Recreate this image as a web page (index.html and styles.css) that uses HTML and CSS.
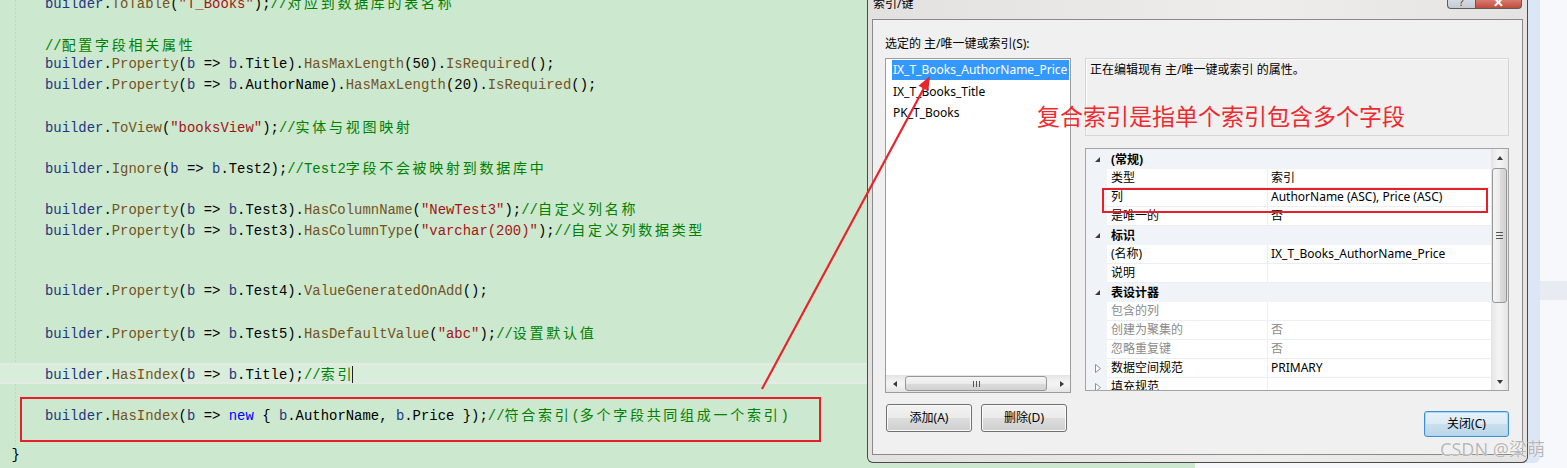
FILE: index.html
```html
<!DOCTYPE html>
<html lang="zh-CN">
<head>
<meta charset="utf-8">
<title>索引/键</title>
<link rel="stylesheet" href="styles.css">
</head>
<body>
<div class="screen">
  <div class="editor">
    <div class="code">
      <div class="guide">
<div class="ln">    <span class="v">builder</span>.<span class="m">ToTable</span>(<span class="s">"T_Books"</span>);<span class="c">//<span class="cn">对应到数据库的表名称</span></span></div>
<div class="ln"> </div>
<div class="ln">    <span class="c">//<span class="cn">配置字段相关属性</span></span></div>
<div class="ln">    <span class="v">builder</span>.<span class="m">Property</span>(<span class="v">b</span> =&gt; <span class="v">b</span>.Title).<span class="m">HasMaxLength</span>(50).<span class="m">IsRequired</span>();</div>
<div class="ln">    <span class="v">builder</span>.<span class="m">Property</span>(<span class="v">b</span> =&gt; <span class="v">b</span>.AuthorName).<span class="m">HasMaxLength</span>(20).<span class="m">IsRequired</span>();</div>
<div class="ln"> </div>
<div class="ln">    <span class="v">builder</span>.<span class="m">ToView</span>(<span class="s">"booksView"</span>);<span class="c">//<span class="cn">实体与视图映射</span></span></div>
<div class="ln"> </div>
<div class="ln">    <span class="v">builder</span>.<span class="m">Ignore</span>(<span class="v">b</span> =&gt; <span class="v">b</span>.Test2);<span class="c">//Test2<span class="cn">字段不会被映射到数据库中</span></span></div>
<div class="ln"> </div>
<div class="ln">    <span class="v">builder</span>.<span class="m">Property</span>(<span class="v">b</span> =&gt; <span class="v">b</span>.Test3).<span class="m">HasColumnName</span>(<span class="s">"NewTest3"</span>);<span class="c">//<span class="cn">自定义列名称</span></span></div>
<div class="ln">    <span class="v">builder</span>.<span class="m">Property</span>(<span class="v">b</span> =&gt; <span class="v">b</span>.Test3).<span class="m">HasColumnType</span>(<span class="s">"varchar(200)"</span>);<span class="c">//<span class="cn">自定义列数据类型</span></span></div>
<div class="ln"> </div>
<div class="ln"> </div>
<div class="ln">    <span class="v">builder</span>.<span class="m">Property</span>(<span class="v">b</span> =&gt; <span class="v">b</span>.Test4).<span class="m">ValueGeneratedOnAdd</span>();</div>
<div class="ln"> </div>
<div class="ln">    <span class="v">builder</span>.<span class="m">Property</span>(<span class="v">b</span> =&gt; <span class="v">b</span>.Test5).<span class="m">HasDefaultValue</span>(<span class="s">"abc"</span>);<span class="c">//<span class="cn">设置默认值</span></span></div>
<div class="ln"> </div>
<div class="ln cur">    <span class="v">builder</span>.<span class="m">HasIndex</span>(<span class="v">b</span> =&gt; <span class="v">b</span>.Title);<span class="c">//<span class="cn">索引</span></span><span class="caret"></span></div>
<div class="ln"> </div>
<div class="ln">    <span class="v">builder</span>.<span class="m">HasIndex</span>(<span class="v">b</span> =&gt; <span class="k">new</span> { <span class="v">b</span>.AuthorName, <span class="v">b</span>.Price });<span class="c">//<span class="cn">符合索引</span>(<span class="cn">多个字段共同组成一个索引</span>)</span></div>
<div class="ln"> </div>
      </div>
<div class="ln">}</div>
    </div>
  </div>
  <div class="side"><div class="side-band"></div></div>

  <div class="dialog">
    <div class="titlebar">
      <span class="title">索引/键</span>
      <div class="caption-btns">
        <span class="cbtn help">?</span>
        <span class="cbtn close">✕</span>
      </div>
    </div>
    <div class="client">
      <div class="label">选定的 主/唯一键或索引(S):</div>
      <div class="listbox">
        <div class="items">
          <div class="item sel">IX_T_Books_AuthorName_Price</div>
          <div class="item">IX_T_Books_Title</div>
          <div class="item">PK_T_Books</div>
        </div>
        <div class="hscroll">
          <span class="sbtn"><span class="tri-left"></span></span>
          <span class="hthumb"><i></i><i></i><i></i></span>
          <span class="sfill"></span>
          <span class="sbtn"><span class="tri-right"></span></span>
        </div>
      </div>
      <div class="rightcol">
        <div class="desc">正在编辑现有 主/唯一键或索引 的属性。</div>
        <div class="pgrid">
          <div class="rows">
            <div class="prow cat"><span class="g"><span class="exp"></span></span><span class="n">(常规)</span></div>
            <div class="prow"><span class="g"></span><span class="n">类型</span><span class="val">索引</span></div>
            <div class="prow"><span class="g"></span><span class="n">列</span><span class="val">AuthorName (ASC), Price (ASC)</span></div>
            <div class="prow"><span class="g"></span><span class="n">是唯一的</span><span class="val">否</span></div>
            <div class="prow cat"><span class="g"><span class="exp"></span></span><span class="n">标识</span></div>
            <div class="prow"><span class="g"></span><span class="n">(名称)</span><span class="val">IX_T_Books_AuthorName_Price</span></div>
            <div class="prow"><span class="g"></span><span class="n">说明</span><span class="val"></span></div>
            <div class="prow cat"><span class="g"><span class="exp"></span></span><span class="n">表设计器</span></div>
            <div class="prow dis"><span class="g"></span><span class="n">包含的列</span><span class="val"></span></div>
            <div class="prow dis"><span class="g"></span><span class="n">创建为聚集的</span><span class="val">否</span></div>
            <div class="prow dis"><span class="g"></span><span class="n">忽略重复键</span><span class="val">否</span></div>
            <div class="prow"><span class="g"><svg class="col" width="6" height="9" viewBox="0 0 6 9"><polygon points="0.5,0.5 5.5,4.5 0.5,8.5" fill="#fff" stroke="#8f8f8f"/></svg></span><span class="n">数据空间规范</span><span class="val">PRIMARY</span></div>
            <div class="prow"><span class="g"><svg class="col" width="6" height="9" viewBox="0 0 6 9"><polygon points="0.5,0.5 5.5,4.5 0.5,8.5" fill="#fff" stroke="#8f8f8f"/></svg></span><span class="n">填充规范</span><span class="val"></span></div>
          </div>
          <div class="vscroll">
            <span class="vbtn"><span class="tri-up"></span></span>
            <span class="vthumb"><i></i><i></i><i></i></span>
            <span class="sfill"></span>
            <span class="vbtn"><span class="tri-down"></span></span>
          </div>
        </div>
      </div>
      <div class="btns-left">
        <button class="wbtn">添加(A)</button>
        <button class="wbtn">删除(D)</button>
      </div>
      <div class="btns-right">
        <button class="wbtn default">关闭(C)</button>
      </div>
    </div>
  </div>

  <svg class="arrow" width="1567" height="468" viewBox="0 0 1567 468">
    <line x1="762" y1="389" x2="924" y2="88" stroke="#e8242b" stroke-width="2.2"/>
    <polygon points="930,76 928.3,91 918.5,85.7" fill="#e8242b"/>
  </svg>
  <div class="redbox code-box"></div>
  <div class="redbox prop-box"></div>
  <div class="note">复合索引是指单个索引包含多个字段</div>
  <div class="watermark">CSDN @梁萌</div>
</div>
</body>
</html>
```

FILE: styles.css
```css
html, body {
  margin: 0;
  padding: 0;
}
body {
  width: 1567px;
  height: 468px;
  overflow: hidden;
  background: #cce8cf;
  font-family: "Noto Sans", "Noto Sans CJK SC", sans-serif;
}
.screen {
  position: relative;
  display: flex;
  width: 1567px;
  height: 468px;
  overflow: hidden;
}

/* ---------- code editor ---------- */
.editor {
  flex: none;
  width: 1195px;
  background: #cce8cf;
  overflow: hidden;
}
.code {
  margin-top: -7.6px;
  font-family: "Liberation Mono", monospace;
  font-size: 13.93px;
  line-height: 20.6px;
  color: #000;
}
.guide {
  background-image: linear-gradient(#d8c8cc 50%, transparent 50%);
  background-size: 1px 4px;
  background-repeat: repeat-y;
  background-position: 15px 0;
}
.ln {
  height: 20.6px;
  padding-left: 11.5px;
  white-space: pre;
}
.ln.cur {
  background: #d8edda;
  box-shadow: inset 0 2px 0 #e4ebe5, inset 0 -2px 0 #e4ebe5;
}
.v { color: #1f377f; }
.m { color: #74531f; }
.s { color: #a31515; }
.c { color: #008000; }
.k { color: #0000ff; }
.cn {
  font-family: "Noto Sans CJK SC", sans-serif;
  font-size: 14px;
  letter-spacing: 2.72px;
}
.caret {
  display: inline-block;
  width: 0;
  height: 17px;
  margin-left: -2px;
  border-left: 1px solid #222;
  vertical-align: -4px;
}

/* ---------- right side background ---------- */
.side {
  flex: 1;
  background: #f6f8fc;
}
.side-band {
  margin-top: 281px;
  height: 19px;
  background: #e8ebf2;
}

/* ---------- dialog window ---------- */
.dialog {
  position: absolute;
  left: 867px;
  top: 0;
  width: 661px;
  height: 463px;
  box-sizing: border-box;
  border: 1px solid #4a4a4a;
  border-top: none;
  border-radius: 0 0 6px 6px;
  background: linear-gradient(to right, #e3e1df, #ebe9e7 40%, #efedeb 60%, #e5e3e1);
  box-shadow: 12px 0 0 #dbe7f7;
  display: flex;
  flex-direction: column;
  font-family: "Noto Sans", "Noto Sans CJK SC", sans-serif;
  font-size: 12px;
  color: #000;
}
.titlebar {
  height: 19px;
  flex: none;
  display: flex;
  justify-content: space-between;
  align-items: flex-start;
  overflow: hidden;
}
.title {
  margin: -5px 0 0 5px;
  line-height: 17px;
}
.caption-btns {
  display: flex;
  margin-right: 5px;
}
.cbtn {
  height: 9px;
  box-sizing: border-box;
  border: 1px solid #5c5c5c;
  border-top: none;
  display: flex;
  justify-content: center;
  align-items: flex-end;
  overflow: hidden;
  line-height: 12px;
}
.cbtn.help {
  width: 28px;
  border-radius: 0 0 0 4px;
  border-right: none;
  background: linear-gradient(#d4dae1, #c3cad2);
  color: #333;
  font-size: 10px;
}
.cbtn.close {
  width: 47px;
  border-radius: 0 0 4px 0;
  background: linear-gradient(#d77a6f, #c24a3c);
  color: #fff;
  font-size: 13px;
  font-weight: bold;
}
.client {
  flex: 1;
  margin: 0 4px 7px 4px;
  border: 1px solid #8a8a8a;
  background: #f0f0f0;
  display: grid;
  grid-template-columns: 186px 424px;
  grid-template-rows: 16px 335px 28px;
  column-gap: 14px;
  row-gap: 6px;
  padding: 16px 13px 0 12px;
  align-content: start;
}
.label {
  line-height: 16px;
  white-space: nowrap;
}

/* list box */
.listbox {
  grid-column: 1;
  grid-row: 2;
  box-sizing: border-box;
  border: 1px solid #9c9c9c;
  background: #fff;
  display: flex;
  flex-direction: column;
  overflow: hidden;
}
.items {
  flex: 1;
  padding: 1px 1px 0 6px;
}
.item {
  height: 21px;
  line-height: 21px;
  padding-left: 1px;
  white-space: nowrap;
  overflow: hidden;
}
.item.sel {
  background: #3399ff;
  color: #fff;
  height: 20px;
  line-height: 20px;
  margin-bottom: 1px;
}
.hscroll {
  height: 17px;
  flex: none;
  display: flex;
  align-items: center;
  background: linear-gradient(#e4e4e4, #f3f3f3 40%, #f3f3f3 60%, #e4e4e4);
}
.sbtn {
  width: 17px;
  height: 17px;
  display: flex;
  align-items: center;
  justify-content: center;
}
.sfill { flex: 1; }
.tri-left {
  width: 0; height: 0;
  border-top: 3.5px solid transparent;
  border-bottom: 3.5px solid transparent;
  border-right: 4px solid #3a3a3a;
}
.tri-right {
  width: 0; height: 0;
  border-top: 3.5px solid transparent;
  border-bottom: 3.5px solid transparent;
  border-left: 4px solid #3a3a3a;
}
.tri-up {
  width: 0; height: 0;
  border-left: 3.5px solid transparent;
  border-right: 3.5px solid transparent;
  border-bottom: 4px solid #3a3a3a;
}
.tri-down {
  width: 0; height: 0;
  border-left: 3.5px solid transparent;
  border-right: 3.5px solid transparent;
  border-top: 4px solid #3a3a3a;
}
.hthumb {
  margin-left: 2px;
  width: 142px;
  height: 15px;
  box-sizing: border-box;
  border: 1px solid #979797;
  border-radius: 3px;
  background: linear-gradient(#f4f4f4, #ebebeb 50%, #dcdcdc 51%, #d2d2d2);
  display: flex;
  justify-content: center;
  align-items: center;
  gap: 2px;
}
.hthumb i {
  width: 1px;
  height: 6px;
  background: #555;
}

/* right column */
.rightcol {
  grid-column: 2;
  grid-row: 2;
  display: flex;
  flex-direction: column;
  gap: 12px;
}
.desc {
  height: 78px;
  box-sizing: border-box;
  border: 1px solid #d6d6d6;
  box-shadow: inset 1px 1px 0 #fbfbfb;
  padding: 3px 4px;
  line-height: 16px;
}
.pgrid {
  height: 243px;
  box-sizing: border-box;
  border: 1px solid #a3a3a3;
  background: #fff;
  display: flex;
}
.rows {
  flex: 1;
  overflow: hidden;
  padding-top: 1px;
  background: #f0f4f9;
}
.prow {
  display: grid;
  grid-template-columns: 21px 160px 1fr;
  height: 19px;
  line-height: 19px;
  white-space: nowrap;
}
.prow .g {
  display: flex;
  align-items: center;
  justify-content: center;
  padding-left: 2px;
}
.prow .n {
  background: #fff;
  padding-left: 4px;
  border-bottom: 1px solid #ebeff5;
  line-height: 18px;
  overflow: hidden;
}
.prow .val {
  background: #fff;
  padding-left: 3px;
  border-left: 1px solid #ebeff5;
  border-bottom: 1px solid #ebeff5;
  line-height: 18px;
  overflow: hidden;
}
.prow.cat .n {
  grid-column: 2 / 4;
  background: transparent;
  border-bottom: none;
  font-weight: bold;
  line-height: 19px;
}
.prow.dis .n,
.prow.dis .val {
  color: #8b8b8b;
}
.exp {
  width: 0; height: 0;
  border-left: 5px solid transparent;
  border-bottom: 5px solid #3c3c3c;
}
.col {
  display: block;
}
.vscroll {
  width: 17px;
  flex: none;
  display: flex;
  flex-direction: column;
  align-items: center;
  background: linear-gradient(to right, #e4e4e4, #f3f3f3 40%, #f3f3f3 60%, #e4e4e4);
}
.vbtn {
  width: 17px;
  height: 17px;
  display: flex;
  align-items: center;
  justify-content: center;
}
.vthumb {
  margin-top: 2px;
  width: 15px;
  height: 135px;
  box-sizing: border-box;
  border: 1px solid #979797;
  border-radius: 3px;
  background: linear-gradient(to right, #f4f4f4, #ebebeb 50%, #dcdcdc 51%, #d2d2d2);
  display: flex;
  flex-direction: column;
  justify-content: center;
  align-items: center;
  gap: 2px;
}
.vthumb i {
  width: 7px;
  height: 1px;
  background: #555;
}

/* buttons */
.btns-left {
  grid-column: 1;
  grid-row: 3;
  margin-top: 5px;
  display: flex;
  gap: 9px;
  margin-left: 1px;
}
.btns-right {
  grid-column: 2;
  grid-row: 3;
  margin-top: 12px;
  display: flex;
  justify-content: flex-end;
}
.wbtn {
  width: 86px;
  height: 28px;
  box-sizing: border-box;
  border: 1px solid #707070;
  border-radius: 3px;
  background: linear-gradient(#f2f2f2, #ebebeb 50%, #dddddd 51%, #cfcfcf);
  box-shadow: inset 0 0 0 1px #fbfbfb;
  font-family: "Noto Sans", "Noto Sans CJK SC", sans-serif;
  font-size: 12px;
  color: #000;
  padding: 0;
  line-height: 26px;
}
.wbtn.default {
  width: 85px;
  height: 26px;
  line-height: 24px;
  border-color: #3c8fd0;
  background: linear-gradient(#e7f2fa, #dbeaf5 50%, #c9dfee 51%, #bcd6e8);
  box-shadow: inset 0 0 0 1px #a8d8f5;
}

/* ---------- annotations ---------- */
.arrow {
  position: absolute;
  left: 0;
  top: 0;
  pointer-events: none;
}
.redbox {
  position: absolute;
  box-sizing: border-box;
  border: 2px solid #e6202a;
}
.code-box {
  left: 20px;
  top: 397px;
  width: 801px;
  height: 45px;
}
.prop-box {
  left: 1102px;
  top: 188px;
  width: 386px;
  height: 25px;
}
.note {
  position: absolute;
  left: 1037px;
  top: 102px;
  font-family: "Noto Sans CJK SC", sans-serif;
  font-size: 23px;
  line-height: 27px;
  color: #ee2a2e;
  white-space: nowrap;
}
.watermark {
  position: absolute;
  left: 1440px;
  top: 436px;
  font-family: "Noto Sans", "Noto Sans CJK SC", sans-serif;
  font-size: 18px;
  line-height: 26px;
  color: #b8b8b8;
  text-shadow: 0 0 1px #fff, 0 0 1px #fff;
  white-space: nowrap;
}
```
